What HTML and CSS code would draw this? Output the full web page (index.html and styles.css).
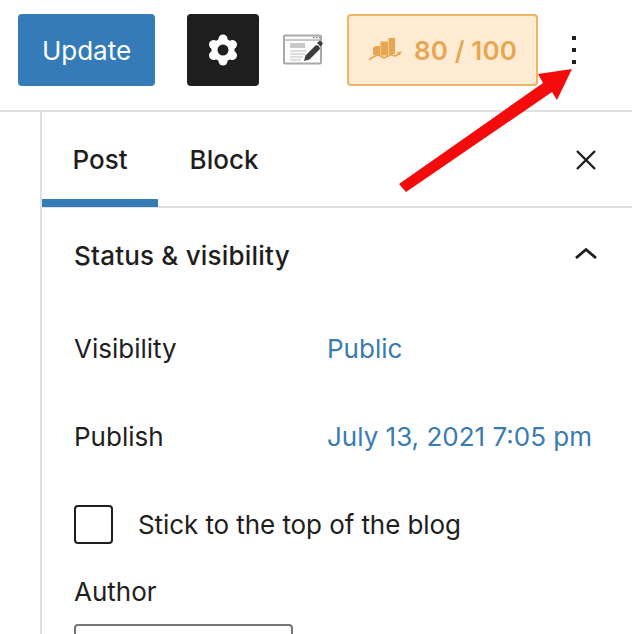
FILE: index.html
```html
<!DOCTYPE html>
<html lang="en">
<head>
    <meta charset="UTF-8">
    <meta name="viewport" content="width=device-width, initial-scale=1.0">
    <title>Post settings</title>
    <link rel="stylesheet" href="styles.css">
</head>
<body>

<header class="toolbar">
    <button class="update-button">Update</button>
    <button class="settings-button">
        <svg width="32" height="34" viewBox="0 0 32 34">
            <g stroke="#fff" stroke-width="9" stroke-linecap="round">
                <path d="M16 6v22"/>
                <path d="M6.500 11.500l19 11"/>
                <path d="M25.500 11.500l-19 11"/>
            </g>
            <circle cx="16" cy="17" r="11.500" fill="#fff"/>
            <circle cx="16" cy="17" r="5.500" fill="#1e1e1e"/>
        </svg>
    </button>
    <svg class="editor-icon" width="40" height="32" viewBox="0 0 40 32">
        <rect x="1" y="1.500" width="37" height="28" rx="1" fill="#fdfdfd" stroke="#a9a9a9" stroke-width="2"/>
        <path d="M1 6h37" stroke="#b5b5b5" stroke-width="1.500"/>
        <path d="M30 3.500h1.500M33 3.500h1.500M36 3.500h1" stroke="#777" stroke-width="1.500"/>
        <rect x="7" y="9" width="15" height="5" fill="#c9c9c9"/>
        <path d="M7 17h17M7 20h15M7 23h13M7 26h11" stroke="#d2d2d2" stroke-width="1.600"/>
        <path d="M21 27l1.500-5.500L33 11l3 1 1 3-10.500 10.500z" fill="#3c3c3c"/>
        <path d="M34 9l3-2.500 3 3-2.500 3z" fill="#3c3c3c"/>
    </svg>
    <div class="score">
        <svg width="34" height="24" viewBox="0 0 34 24">
            <g fill="#e9a651">
                <path d="M5 10l2.500-2H12v9H5z"/>
                <rect x="12.500" y="3.500" width="7.500" height="14"/>
                <rect x="20.500" y="0" width="6.500" height="16"/>
            </g>
            <path d="M1 21.500l9-5 6 3.500 7-3.500 4 1.500 5-3" fill="none" stroke="#e9a651" stroke-width="1.800"/>
            <path d="M34 13.500l-5 .5 2.500 3.500z" fill="#e9a651"/>
        </svg>
        <span class="score-value">80 / 100</span>
    </div>
    <div class="more-menu"><span></span><span></span><span></span></div>
</header>

<main class="sidebar">
    <div class="tabs">
        <div class="tab active">Post</div>
        <div class="tab block-tab">Block</div>
        <svg class="close-icon" width="20" height="20" viewBox="0 0 20 20"><path d="M1 1l18 18M19 1L1 19" stroke="#1e1e1e" stroke-width="2.400" fill="none"/></svg>
    </div>

    <section class="panel">
        <div class="panel-title">
            <h2>Status &amp; visibility</h2>
            <svg width="22" height="12" viewBox="0 0 22 12"><path d="M1 11l10-8.500L21 11" stroke="#1e1e1e" stroke-width="2.800" fill="none"/></svg>
        </div>
        <div class="row">
            <span class="row-label">Visibility</span>
            <a class="row-value">Public</a>
        </div>
        <div class="row">
            <span class="row-label">Publish</span>
            <a class="row-value">July 13, 2021 7:05 pm</a>
        </div>
        <label class="sticky-row">
            <span class="checkbox"></span>
            <span class="sticky-text">Stick to the top of the blog</span>
        </label>
        <div class="author-label">Author</div>
        <div class="author-select"></div>
    </section>
</main>

<svg class="arrow" width="632" height="634" viewBox="0 0 632 634"><polygon points="399,184 543,83 538,74 572,69 557,100 552,92 406,192" fill="#f40b0b"/></svg>

</body>
</html>
```

FILE: styles.css
```css
html, body {
    height: 100%;
}
body {
    font-family: Inter, "Noto Sans", sans-serif;
    margin: 0;
    padding: 0;
    background-color: #fff;
    color: #1e1e1e;
    overflow: hidden;
    position: relative;
}
.toolbar {
    display: flex;
    align-items: center;
    height: 100px;
    padding: 0 0 10px 18px;
    border-bottom: 2px solid #e0e0e0;
}
.update-button {
    width: 137px;
    height: 72px;
    padding: 0;
    border: none;
    border-radius: 4px;
    background-color: #347bb7;
    color: #fff;
    font-family: inherit;
    font-size: 26px;
}
.settings-button {
    display: flex;
    align-items: center;
    justify-content: center;
    width: 72px;
    height: 72px;
    margin-left: 32px;
    padding: 0;
    border: none;
    border-radius: 4px;
    background-color: #1e1e1e;
}
.editor-icon {
    margin-left: 24px;
}
.score {
    display: flex;
    align-items: center;
    justify-content: center;
    gap: 12px;
    box-sizing: border-box;
    width: 191px;
    height: 72px;
    margin-left: 24px;
    border: 2px solid #efb564;
    border-radius: 4px;
    background-color: #fdecd3;
    color: #e9a651;
    font-size: 26px;
    font-weight: 600;
    letter-spacing: 0.1px;
}
.more-menu {
    display: flex;
    flex-direction: column;
    gap: 8px;
    margin-left: 34px;
}
.more-menu span {
    width: 4px;
    height: 4px;
    background-color: #1e1e1e;
}
.sidebar {
    margin-left: 40px;
    border-left: 2px solid #e0e0e0;
    height: 522px;
    overflow: hidden;
}
.tabs {
    display: flex;
    align-items: stretch;
    height: 94px;
    border-bottom: 2px solid #e0e0e0;
}
.tab {
    display: flex;
    align-items: center;
    justify-content: center;
    box-sizing: border-box;
    width: 116px;
    height: 95px;
    font-size: 26px;
    font-weight: 500;
}
.tab.active {
    border-bottom: 8px solid #347bb7;
    padding-top: 8px;
}
.block-tab {
    margin-left: 8px;
}
.close-icon {
    margin: 38px 36px 0 auto;
}
.panel {
    padding: 0 35px 0 32px;
}
.panel-title {
    display: flex;
    align-items: center;
    justify-content: space-between;
    height: 96px;
}
.panel-title svg {
    margin-top: -6px;
}
.panel-title h2 {
    margin: -2px 0 0;
    font-size: 26px;
    font-weight: 500;
    letter-spacing: 0.2px;
}
.row {
    display: flex;
    align-items: center;
    height: 88px;
    font-size: 26px;
}
.row-label {
    width: 253px;
}
.row-value {
    color: #3a7bb0;
}
.sticky-row {
    display: flex;
    align-items: center;
    gap: 25px;
    height: 88px;
    font-size: 26px;
}
.sticky-text {
    letter-spacing: -0.08px;
}
.checkbox {
    box-sizing: border-box;
    width: 39px;
    height: 39px;
    border: 2px solid #1e1e1e;
    border-radius: 4px;
}
.author-label {
    margin-top: 8px;
    font-size: 26px;
    line-height: 32px;
}
.author-select {
    box-sizing: border-box;
    width: 219px;
    height: 60px;
    margin-top: 16px;
    border: 2px solid #757575;
    border-radius: 4px;
}
.arrow {
    position: absolute;
    top: 0;
    left: 0;
}
```
